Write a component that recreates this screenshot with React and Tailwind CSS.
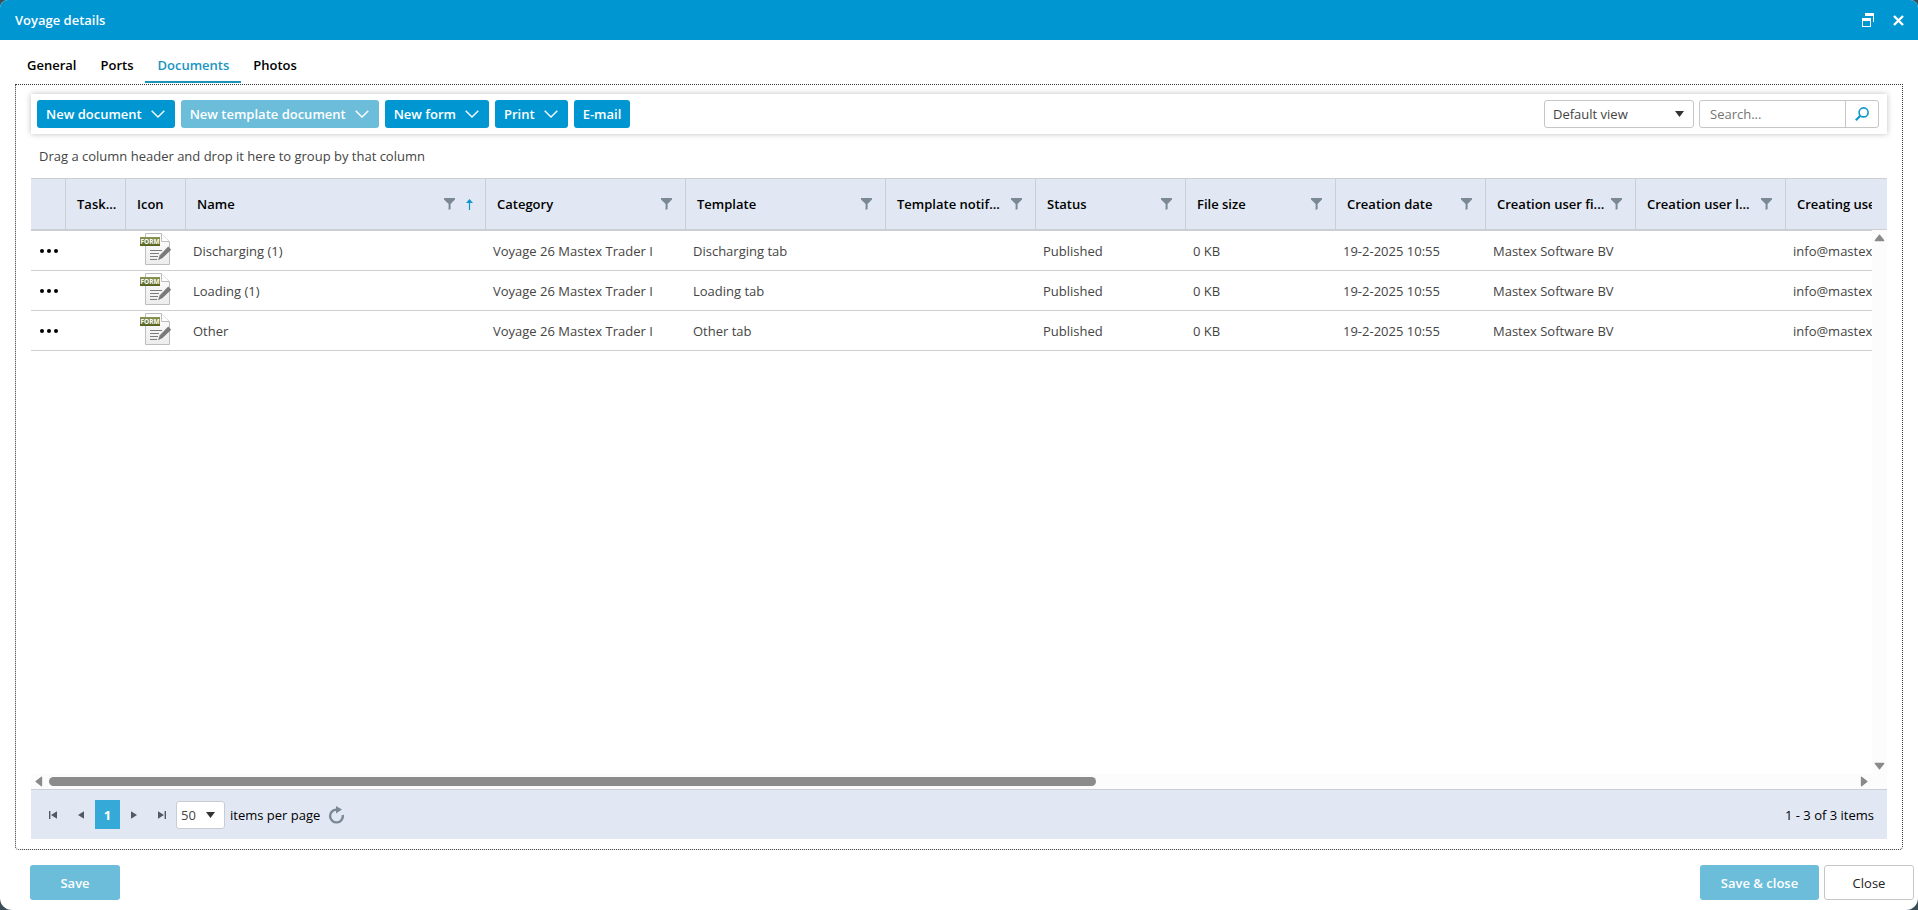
import { useState } from 'react';

const tabs = ['General', 'Ports', 'Documents', 'Photos'];

const columns = [
  { title: 'Actions', width: 34, label: '' },
  { title: 'Tasks', width: 60, label: 'Task...' },
  { title: 'Icon', width: 60 },
  { title: 'Name', width: 300, filter: true, sorted: true },
  { title: 'Category', width: 200, filter: true },
  { title: 'Template', width: 200, filter: true },
  { title: 'Template notification', width: 150, filter: true, label: 'Template notif...' },
  { title: 'Status', width: 150, filter: true },
  { title: 'File size', width: 150, filter: true },
  { title: 'Creation date', width: 150, filter: true },
  { title: 'Creation user first name', width: 150, filter: true, label: 'Creation user fi...' },
  { title: 'Creation user last name', width: 150, filter: true, label: 'Creation user l...' },
  { title: 'Creating user', width: 150 },
];

const documents = [
  { id: 1, name: 'Discharging (1)', template: 'Discharging tab' },
  { id: 2, name: 'Loading (1)', template: 'Loading tab' },
  { id: 3, name: 'Other', template: 'Other tab' },
];

const FilterIcon = () => (
  <svg className="w-[11px] h-3" viewBox="0 0 11 12" fill="#7b8994">
    <path d="M0 0h11v1.5L6.6 6v5L4.6 12V6L0 1.5z" />
  </svg>
);

const SortIcon = () => (
  <svg className="w-[7px] h-[11px]" viewBox="0 0 7 11" fill="#0f96cb">
    <path d="M3.5 0L7 4H4.1v7H2.9V4H0z" />
  </svg>
);

const ChevronIcon = () => (
  <svg className="w-[14px] h-2" viewBox="0 0 14 8" fill="none" stroke="currentColor" strokeWidth="1.4">
    <path d="M.7.7L7 7l6.3-6.3" />
  </svg>
);

const FormIcon = () => (
  <svg className="block w-8 h-8" viewBox="0 0 32 32" role="img" aria-label="Form">
    <defs>
      <linearGradient id="sheet" x1="0" y1="0" x2="0" y2="1">
        <stop offset="0" stopColor="#ffffff" />
        <stop offset="1" stopColor="#ececec" />
      </linearGradient>
      <linearGradient id="badge" x1="0" y1="0" x2="0" y2="1">
        <stop offset="0" stopColor="#8a9653" />
        <stop offset="1" stopColor="#55611d" />
      </linearGradient>
    </defs>
    <path d="M5.5.5h16l8 8v23h-24z" fill="url(#sheet)" stroke="#bdbdbd" />
    <path d="M21.5.5v8h8" fill="#fff" stroke="#bdbdbd" />
    <rect x="0" y="4" width="20" height="9" fill="url(#badge)" />
    <text x="10" y="11" textAnchor="middle" fontSize="6.5" fontWeight="700" fill="#fff">FORM</text>
    <path d="M10 17.5h12M10 20.5h9M10 23.5h8M10 26.5h7" stroke="#7d7d7d" />
    <path d="M28.2 13.6l3 3.2-8.6 8.2-4.6 2.3 1.8-5z" fill="#7a7a7a" />
  </svg>
);

const DropArrow = () => (
  <svg className="absolute right-2.5 top-1/2 -translate-y-1/2 w-[9px] h-1.5 pointer-events-none" viewBox="0 0 9 6" fill="#333">
    <path d="M0 0h9L4.5 6z" />
  </svg>
);

const MenuButton = ({ children, disabled }) => (
  <button
    type="button"
    disabled={disabled}
    className="flex items-center gap-[9px] h-7 pl-[9px] pr-2.5 rounded-[3px] bg-[#0096d1] text-white font-semibold disabled:bg-[#6bbdda]"
  >
    {children}
    <ChevronIcon />
  </button>
);

const PagerButton = ({ label, d }) => (
  <button type="button" aria-label={label} className="flex items-center justify-center w-7 h-7">
    <svg className="w-2 h-2" viewBox="0 0 8 8" fill="#4f5a64">
      <path d={d} />
    </svg>
  </button>
);

const ScrollArrow = ({ label, d }) => (
  <button type="button" aria-label={label} className="flex items-center justify-center shrink-0 w-[15px] h-[15px]">
    <svg className="w-[11px] h-[11px]" viewBox="0 0 9 9" fill="#8a8a8a" stroke="#8a8a8a" strokeLinejoin="round">
      <path d={d} />
    </svg>
  </button>
);

const HeaderCell = ({ column, index }) => (
  <th
    scope="col"
    title={column.title}
    className={`h-[50px] p-0 text-left font-semibold text-black ${index > 0 ? 'border-l border-[#cbced2]' : ''}`}
  >
    <div className={`flex items-center pl-[11px] ${column.sorted ? 'pr-3' : 'pr-[13px]'}`}>
      <span className="flex-1 whitespace-nowrap">{column.label ?? column.title}</span>
      {column.filter && (
        <button type="button" aria-label={`Filter ${column.title}`}>
          <FilterIcon />
        </button>
      )}
      {column.sorted && (
        <span className="ml-[11px]">
          <SortIcon />
        </span>
      )}
    </div>
  </th>
);

const Grid = () => (
  <div className="flex flex-1 min-h-0 border-t border-[#cbced2]">
    <div className="flex flex-col flex-1 min-w-0">
      <div className="flex-1 min-h-0 overflow-hidden">
        <table className="table-fixed w-[1904px] border-separate border-spacing-0">
          <colgroup>
            {columns.map((column) => (
              <col key={column.title} style={{ width: column.width }} />
            ))}
          </colgroup>
          <thead className="bg-[#e1e8f3]">
            <tr>
              {columns.map((column, index) => (
                <HeaderCell key={column.title} column={column} index={index} />
              ))}
            </tr>
          </thead>
          <tbody className="text-[#444]">
            <tr aria-hidden="true">
              <td colSpan={13} className="h-0.5 p-0 bg-[#cbced2]"></td>
            </tr>
            {documents.map((doc) => (
              <tr key={doc.id} className="h-10 *:border-b *:border-[#cfcfcf] *:whitespace-nowrap">
                <td className="px-2 py-0">
                  <button type="button" aria-label={`Actions for ${doc.name}`} className="block">
                    <svg className="w-5 h-1" viewBox="0 0 20 4" fill="#000">
                      <circle cx="3" cy="2" r="2" />
                      <circle cx="10" cy="2" r="2" />
                      <circle cx="17" cy="2" r="2" />
                    </svg>
                  </button>
                </td>
                <td></td>
                <td className="pl-[15px] pt-0.5 pb-0 align-top">
                  <FormIcon />
                </td>
                <td className="px-2 py-0">{doc.name}</td>
                <td className="px-2 py-0">Voyage 26 Mastex Trader I</td>
                <td className="px-2 py-0">{doc.template}</td>
                <td></td>
                <td className="px-2 py-0">Published</td>
                <td className="px-2 py-0">0 KB</td>
                <td className="px-2 py-0">19-2-2025 10:55</td>
                <td className="px-2 py-0">Mastex Software BV</td>
                <td></td>
                <td className="px-2 py-0">info@mastex</td>
              </tr>
            ))}
          </tbody>
        </table>
      </div>
      <div className="flex items-center h-[15px] bg-[#fcfcfc]">
        <ScrollArrow label="Scroll left" d="M7 1v7L2.5 4.5z" />
        <div className="flex-1 px-[3px]">
          <div className="w-[58%] h-[9px] rounded-full bg-[#8b8b8b]"></div>
        </div>
        <ScrollArrow label="Scroll right" d="M2 1v7L6.5 4.5z" />
      </div>
    </div>
    <div className="flex flex-col w-[15px]">
      <div className="h-[51px] bg-[#e1e8f3] border-b border-[#cbced2]"></div>
      <div className="flex flex-col flex-1 justify-between bg-[#fcfcfc] pb-[15px]">
        <ScrollArrow label="Scroll up" d="M1 7h7L4.5 2.5z" />
        <ScrollArrow label="Scroll down" d="M1 2h7L4.5 6.5z" />
      </div>
    </div>
  </div>
);

const Pager = () => (
  <div className="flex items-center h-[50px] pl-2 pr-[13px] bg-[#e1e8f3] border-t border-[#cbced2] text-black">
    <PagerButton label="First page" d="M0 0h1.4v8H0zM8 .3v7.4L2 4z" />
    <PagerButton label="Previous page" d="M7 .3v7.4L1 4z" />
    <button type="button" aria-current="page" className="w-[25px] h-[29px] bg-[#35aad9] text-white font-bold">1</button>
    <PagerButton label="Next page" d="M1 .3v7.4L7 4z" />
    <PagerButton label="Last page" d="M6.6 0H8v8H6.6zM0 .3v7.4L6 4z" />
    <label className="flex items-center">
      <span className="relative">
        <select className="appearance-none block w-[49px] h-7 pl-1 rounded-[3px] border border-[#c9ccd2] bg-white text-[#444]">
          <option>50</option>
          <option>100</option>
        </select>
        <DropArrow />
      </span>
      <span className="ml-[5px]">items per page</span>
    </label>
    <button type="button" aria-label="Refresh" className="ml-2">
      <svg className="w-[18px] h-[18px]" viewBox="0 0 18 18" fill="none" stroke="#7b8994" strokeWidth="2.4">
        <path d="M8.5 3.6A6.4 6.4 0 1 0 14.8 9" />
        <path d="M8 0l6 3.6L8 7.6z" fill="#7b8994" stroke="none" />
      </svg>
    </button>
    <span className="ml-auto">1 - 3 of 3 items</span>
  </div>
);

const Toolbar = () => (
  <div className="flex items-center h-10 pl-1.5 pr-2 bg-white shadow-[0_0_6px_rgba(0,0,0,0.25)]">
    <div className="flex items-center gap-1.5">
      <MenuButton>New document</MenuButton>
      <MenuButton disabled>New template document</MenuButton>
      <MenuButton>New form</MenuButton>
      <MenuButton>Print</MenuButton>
      <button type="button" className="h-7 px-[9px] rounded-[3px] bg-[#0096d1] text-white font-semibold">E-mail</button>
    </div>
    <div className="flex items-center gap-[5px] ml-auto">
      <div className="relative">
        <select aria-label="View" className="appearance-none block w-[150px] h-7 pl-2 rounded-[3px] border border-[#c6c6c6] bg-white text-[#444]">
          <option>Default view</option>
        </select>
        <DropArrow />
      </div>
      <div className="flex w-[180px] h-7 rounded-[3px] border border-[#c6c6c6]">
        <input type="text" aria-label="Search" placeholder="Search..." className="flex-1 min-w-0 px-2.5 outline-none placeholder:text-[#757575]" />
        <button type="button" aria-label="Search" className="flex items-center justify-center w-[33px] border-l border-[#c6c6c6]">
          <svg className="w-[14px] h-[14px]" viewBox="0 0 14 14" fill="none" stroke="#0f96cb">
            <circle cx="8.6" cy="5.4" r="4.5" strokeWidth="1.6" />
            <path d="M5.4 8.8L.8 13.2" strokeWidth="2.2" />
          </svg>
        </button>
      </div>
    </div>
  </div>
);

const App = () => {
  const [activeTab, setActiveTab] = useState('Documents');

  return (
    <div className="h-screen bg-[#3b4f58] font-['Open_Sans',sans-serif] text-[13px] leading-[18px] text-[#444]">
      <div className="flex flex-col h-full bg-white rounded-t-lg rounded-b-xl overflow-hidden">
        <header className="flex items-center h-10 pl-[15px] pr-[14px] bg-[#0096d1] text-white">
          <h1 className="font-semibold">Voyage details</h1>
          <button type="button" aria-label="Restore" className="ml-auto">
            <svg className="w-3 h-[14px]" viewBox="0 0 12 14" fill="#fff">
              <path d="M3 0h9v9h-1V3H3zM0 5h9v9H0zM1 8v5h7V8z" fillRule="evenodd" />
            </svg>
          </button>
          <button type="button" aria-label="Close window" className="ml-[19px]">
            <svg className="w-[11px] h-[11px]" viewBox="0 0 11 11" fill="none" stroke="#fff" strokeWidth="2.4">
              <path d="M1 1l9 9M10 1l-9 9" />
            </svg>
          </button>
        </header>

        <nav className="flex pt-2.5 px-[15px]">
          {tabs.map((tab) => (
            <button
              key={tab}
              type="button"
              onClick={() => setActiveTab(tab)}
              className={`h-[33px] px-3 pb-0.5 font-semibold border-b-2 ${
                tab === activeTab ? 'text-[#1a94c0] border-[#1a94b8]' : 'text-black border-transparent'
              }`}
            >
              {tab}
            </button>
          ))}
        </nav>

        <main className="flex flex-col flex-1 min-h-0 mt-px mx-[15px] pt-[9px] px-[15px] pb-2.5 border border-dotted border-[#333] rounded-b">
          <Toolbar />
          <p className="h-11 pl-2 leading-[44px]">Drag a column header and drop it here to group by that column</p>
          <Grid />
          <Pager />
        </main>

        <footer className="flex items-center gap-[5px] h-[60px] pl-[30px] pr-1 pt-[15px] pb-2.5">
          <button type="button" disabled className="w-[90px] h-[35px] rounded-[3px] bg-[#6bbdda] text-white font-semibold">Save</button>
          <button type="button" disabled className="w-[119px] h-[35px] ml-auto rounded-[3px] bg-[#6bbdda] text-white font-semibold">Save &amp; close</button>
          <button type="button" className="w-[90px] h-[35px] rounded-[3px] border border-[#c6c6c6] bg-white text-[#222]">Close</button>
        </footer>
      </div>
    </div>
  );
};

export default App;
